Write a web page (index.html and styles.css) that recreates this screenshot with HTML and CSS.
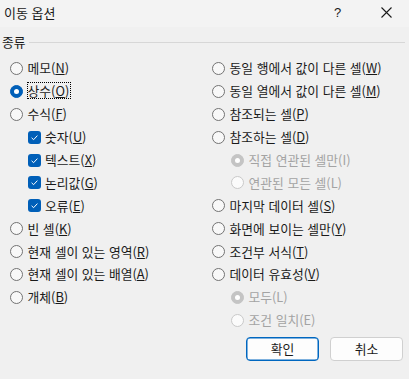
FILE: index.html
```html
<!DOCTYPE html>
<html lang="ko">
<head>
<meta charset="utf-8">
<title>이동 옵션</title>
<link rel="stylesheet" href="styles.css">
</head>
<body>
<div class="dialog">
  <div class="titlebar">
    <span class="title">이동 옵션</span>
    <span class="help">?</span>
    <span class="close"><svg width="11" height="11" viewBox="0 0 11 11"><path d="M0.5 0.5 L10.5 10.5 M10.5 0.5 L0.5 10.5" stroke="#1a1a1a" stroke-width="1.1" fill="none"/></svg></span>
  </div>
  <div class="group-head"><span class="group-label">종류</span><span class="group-line"></span></div>
  <div class="columns">
    <div class="col col-left">
      <div class="row"><span class="radio"></span><span class="lbl">메모(<u>N</u>)</span></div>
      <div class="row"><span class="radio on"></span><span class="lbl focus">상수(<u>O</u>)</span></div>
      <div class="row"><span class="radio"></span><span class="lbl">수식(<u>F</u>)</span></div>
      <div class="row sub-check"><span class="check"><svg width="13" height="13" viewBox="0 0 13 13"><path d="M3.6 6.8 L5.6 8.7 L9.4 4.6" stroke="#fff" stroke-width="1" fill="none"/></svg></span><span class="lbl">숫자(<u>U</u>)</span></div>
      <div class="row sub-check"><span class="check"><svg width="13" height="13" viewBox="0 0 13 13"><path d="M3.6 6.8 L5.6 8.7 L9.4 4.6" stroke="#fff" stroke-width="1" fill="none"/></svg></span><span class="lbl">텍스트(<u>X</u>)</span></div>
      <div class="row sub-check"><span class="check"><svg width="13" height="13" viewBox="0 0 13 13"><path d="M3.6 6.8 L5.6 8.7 L9.4 4.6" stroke="#fff" stroke-width="1" fill="none"/></svg></span><span class="lbl">논리값(<u>G</u>)</span></div>
      <div class="row sub-check"><span class="check"><svg width="13" height="13" viewBox="0 0 13 13"><path d="M3.6 6.8 L5.6 8.7 L9.4 4.6" stroke="#fff" stroke-width="1" fill="none"/></svg></span><span class="lbl">오류(<u>E</u>)</span></div>
      <div class="row"><span class="radio"></span><span class="lbl">빈 셀(<u>K</u>)</span></div>
      <div class="row"><span class="radio"></span><span class="lbl">현재 셀이 있는 영역(<u>R</u>)</span></div>
      <div class="row"><span class="radio"></span><span class="lbl">현재 셀이 있는 배열(<u>A</u>)</span></div>
      <div class="row"><span class="radio"></span><span class="lbl">개체(<u>B</u>)</span></div>
    </div>
    <div class="col col-right">
      <div class="row"><span class="radio"></span><span class="lbl">동일 행에서 값이 다른 셀(<u>W</u>)</span></div>
      <div class="row"><span class="radio"></span><span class="lbl">동일 열에서 값이 다른 셀(<u>M</u>)</span></div>
      <div class="row"><span class="radio"></span><span class="lbl">참조되는 셀(<u>P</u>)</span></div>
      <div class="row"><span class="radio"></span><span class="lbl">참조하는 셀(<u>D</u>)</span></div>
      <div class="row sub disabled"><span class="radio dis-on"></span><span class="lbl">직접 연관된 셀만(I)</span></div>
      <div class="row sub disabled"><span class="radio dis"></span><span class="lbl">연관된 모든 셀(L)</span></div>
      <div class="row"><span class="radio"></span><span class="lbl">마지막 데이터 셀(<u>S</u>)</span></div>
      <div class="row"><span class="radio"></span><span class="lbl">화면에 보이는 셀만(<u>Y</u>)</span></div>
      <div class="row"><span class="radio"></span><span class="lbl">조건부 서식(<u>T</u>)</span></div>
      <div class="row"><span class="radio"></span><span class="lbl">데이터 유효성(<u>V</u>)</span></div>
      <div class="row sub disabled"><span class="radio dis-on"></span><span class="lbl">모두(L)</span></div>
      <div class="row sub disabled"><span class="radio dis"></span><span class="lbl">조건 일치(E)</span></div>
    </div>
  </div>
  <div class="buttons">
    <button class="btn primary">확인</button>
    <button class="btn">취소</button>
  </div>
</div>
</body>
</html>
```
FILE: styles.css
```css
html, body {
  margin: 0;
  padding: 0;
  background: #f0f0f0;
}
body {
  font-family: "Noto Sans CJK KR", "Noto Sans", sans-serif;
  font-size: 12.8px;
  color: #1a1a1a;
  width: 409px;
  height: 379px;
  overflow: hidden;
}
.dialog {
  display: flex;
  flex-direction: column;
  height: 379px;
}
.titlebar {
  height: 27px;
  background: #f3f3f3;
  display: flex;
  align-items: center;
  padding-left: 4px;
}
.title {
  font-size: 13px;
  flex: 1;
  line-height: 27px;
  margin-top: -2px;
}
.help {
  width: 14px;
  font-family: "Liberation Sans", sans-serif;
  font-size: 13px;
  margin-right: 33px;
  margin-top: -2px;
}
.close {
  display: flex;
  width: 11px;
  margin-right: 17px;
  margin-top: -2px;
}
.group-head {
  height: 30px;
  display: flex;
  align-items: center;
  padding-left: 2px;
  padding-right: 4px;
}
.group-label {
  margin-top: -2px;
}
.group-line {
  flex: 1;
  height: 1px;
  background: #d7d7d7;
  margin-left: 3px;
}
.columns {
  display: grid;
  grid-template-columns: 205px 204px;
}
.col {
  display: flex;
  flex-direction: column;
}
.row {
  height: 22.9px;
  display: flex;
  align-items: center;
}
.col-left .row { padding-left: 9.5px; }
.col-right .row { padding-left: 6.5px; }
.col-left .row.sub-check { padding-left: 28px; }
.col-right .row.sub { padding-left: 25.5px; }
.radio {
  width: 13px;
  height: 13px;
  box-sizing: border-box;
  border-radius: 50%;
  border: 1px solid #737373;
  background: #f8f8f8;
  margin-right: 5px;
  flex: none;
  position: relative;
}
.radio.on {
  background: #005fb8;
  border-color: #005fb8;
}
.radio.on::after, .radio.dis-on::after {
  content: "";
  position: absolute;
  left: 3px;
  top: 3px;
  width: 5px;
  height: 5px;
  border-radius: 50%;
  background: #fff;
}
.radio.dis {
  border-color: #c9c9c9;
  background: #fbfbfb;
}
.radio.dis-on {
  background: #c4c4c4;
  border-color: #c4c4c4;
}
.check {
  width: 13px;
  height: 13px;
  border-radius: 3px;
  background: #005fb8;
  margin-right: 4px;
  flex: none;
  display: flex;
}
.lbl {
  line-height: 15px;
  white-space: nowrap;
  margin-top: -1px;
}
.lbl u {
  text-decoration: underline;
  text-underline-offset: 1px;
}
.lbl.focus {
  outline: 1px dotted #000;
  outline-offset: 0;
  padding: 0 1px 0 0;
}
.disabled .lbl {
  color: #a3a3a3;
}
.buttons {
  display: flex;
  justify-content: flex-end;
  gap: 11px;
  padding-right: 6px;
  margin-top: 5px;
}
.btn {
  width: 73px;
  height: 24px;
  box-sizing: border-box;
  border: 1px solid #d0d0d0;
  border-radius: 4px;
  background: #fdfdfd;
  font-family: "Noto Sans CJK KR", "Noto Sans", sans-serif;
  font-size: 12.8px;
  color: #1a1a1a;
  padding: 0;
  line-height: 20px;
}
.btn.primary {
  border: 1px solid #0067c0;
  box-shadow: inset 0 0 0 0.5px #0067c0;
}
```
